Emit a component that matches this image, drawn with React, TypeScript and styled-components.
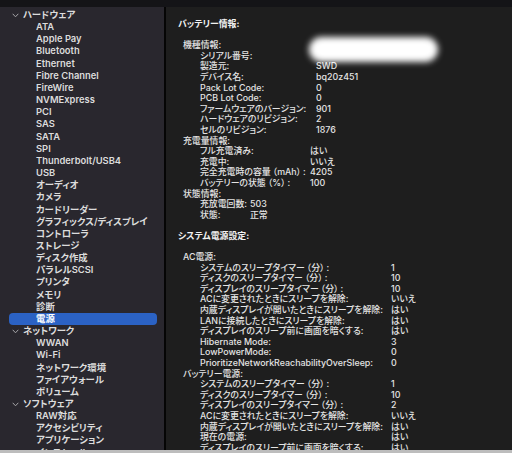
import React from 'react';
import styled, { createGlobalStyle } from 'styled-components';

const GlobalStyle = createGlobalStyle`
  html, body {
    margin: 0;
    padding: 0;
    background: #1e1e1e;
  }
  body {
    font-family: 'Inter', 'Noto Sans CJK JP', sans-serif;
    -webkit-font-smoothing: antialiased;
  }
`;

const Window = styled.div`
  width: 512px;
  height: 453px;
  display: flex;
  flex-direction: column;
  overflow: hidden;
  background: #1e1e1e;
`;

const TopBar = styled.div`
  height: 7px;
  flex-shrink: 0;
  background: #141417;
`;

const BottomBar = styled.div`
  height: 3px;
  flex-shrink: 0;
  background: #bdbdbd;
`;

const Main = styled.div`
  flex: 1;
  display: flex;
  min-height: 0;
`;

const Sidebar = styled.div`
  width: 164px;
  flex-shrink: 0;
  background: #29272e;
  border-right: 2px solid #050505;
  padding-top: 2px;
  overflow: hidden;
  font-size: 9.4px;
  font-weight: 600;
  color: #dcdcdc;
  font-feature-settings: 'palt';
`;

const SideRow = styled.div<{ $level: number; $selected?: boolean }>`
  height: 12.17px;
  line-height: 12.17px;
  display: flex;
  align-items: center;
  margin: 0 7px 0 9px;
  padding-left: ${(p) => (p.$level === 0 ? 3 : 27)}px;
  border-radius: 4px;
  white-space: nowrap;
  background: ${(p) => (p.$selected ? '#2b62c4' : 'transparent')};
  color: ${(p) => (p.$selected ? '#ffffff' : '#dcdcdc')};
`;

const Chevron = styled.svg`
  width: 7px;
  height: 5px;
  margin-right: 4px;
  flex-shrink: 0;
`;

const Content = styled.div`
  flex: 1;
  position: relative;
  padding-top: 12px;
  overflow: hidden;
  font-size: 8.9px;
  font-weight: 500;
  color: #e4e4e4;
  font-feature-settings: 'palt';
`;

const Line = styled.div<{ $indent: number; $labelWidth?: number }>`
  height: 10.6px;
  line-height: 10.6px;
  padding-left: ${(p) => p.$indent}px;
  white-space: nowrap;
  display: grid;
  grid-template-columns: ${(p) => (p.$labelWidth ? `${p.$labelWidth}px auto` : 'auto')};
`;

const Heading = styled(Line)`
  font-weight: 700;
  color: #f2f2f2;
`;

const Blank = styled.div`
  height: 10.6px;
`;

const Paren = styled.span`
  padding: 0 2px;
`;

const Redaction = styled.div`
  position: absolute;
  left: 143px;
  top: 30px;
  width: 129px;
  height: 25px;
  border-radius: 13px;
  background: #ffffff;
  filter: blur(3px);
`;

type SideItem = { label: string; level: number; selected?: boolean };

const sidebar: SideItem[] = [
  { label: 'ハードウェア', level: 0 },
  ...[
    'ATA', 'Apple Pay', 'Bluetooth', 'Ethernet', 'Fibre Channel', 'FireWire', 'NVMExpress',
    'PCI', 'SAS', 'SATA', 'SPI', 'Thunderbolt/USB4', 'USB', 'オーディオ', 'カメラ',
    'カードリーダー', 'グラフィックス/ディスプレイ', 'コントローラ', 'ストレージ', 'ディスク作成',
    'パラレルSCSI', 'プリンタ', 'メモリ', '診断',
  ].map((label) => ({ label, level: 1 })),
  { label: '電源', level: 1, selected: true },
  { label: 'ネットワーク', level: 0 },
  ...['WWAN', 'Wi-Fi', 'ネットワーク環境', 'ファイアウォール', 'ボリューム'].map((label) => ({ label, level: 1 })),
  { label: 'ソフトウェア', level: 0 },
  ...['RAW対応', 'アクセシビリティ', 'アプリケーション', 'インストール'].map((label) => ({ label, level: 1 })),
];

type Group = { title: string; width: number; rows: [string, string][] };

const batteryGroups: Group[] = [
  {
    title: '機種情報:',
    width: 116,
    rows: [
      ['シリアル番号:', ''],
      ['製造元:', 'SWD'],
      ['デバイス名:', 'bq20z451'],
      ['Pack Lot Code:', '0'],
      ['PCB Lot Code:', '0'],
      ['ファームウェアのバージョン:', '901'],
      ['ハードウェアのリビジョン:', '2'],
      ['セルのリビジョン:', '1876'],
    ],
  },
  {
    title: '充電量情報:',
    width: 110,
    rows: [
      ['フル充電済み:', 'はい'],
      ['充電中:', 'いいえ'],
      ['完全充電時の容量（mAh）:', '4205'],
      ['バッテリーの状態（%）:', '100'],
    ],
  },
  {
    title: '状態情報:',
    width: 50,
    rows: [
      ['充放電回数:', '503'],
      ['状態:', '正常'],
    ],
  },
];

const powerGroups: Group[] = [
  {
    title: 'AC電源:',
    width: 191,
    rows: [
      ['システムのスリープタイマー（分）:', '1'],
      ['ディスクのスリープタイマー（分）:', '10'],
      ['ディスプレイのスリープタイマー（分）:', '10'],
      ['ACに変更されたときにスリープを解除:', 'いいえ'],
      ['内蔵ディスプレイが開いたときにスリープを解除:', 'はい'],
      ['LANに接続したときにスリープを解除:', 'はい'],
      ['ディスプレイのスリープ前に画面を暗くする:', 'はい'],
      ['Hibernate Mode:', '3'],
      ['LowPowerMode:', '0'],
      ['PrioritizeNetworkReachabilityOverSleep:', '0'],
    ],
  },
  {
    title: 'バッテリー電源:',
    width: 191,
    rows: [
      ['システムのスリープタイマー（分）:', '1'],
      ['ディスクのスリープタイマー（分）:', '10'],
      ['ディスプレイのスリープタイマー（分）:', '2'],
      ['ACに変更されたときにスリープを解除:', 'いいえ'],
      ['内蔵ディスプレイが開いたときにスリープを解除:', 'はい'],
      ['現在の電源:', 'はい'],
      ['ディスプレイのスリープ前に画面を暗くする:', 'はい'],
    ],
  },
];

// full-width brackets keep a little air around them, as the macOS font does
function Label({ text }: { text: string }) {
  const m = text.match(/^(.*)（(.*)）(.*)$/);
  if (!m) return <span>{text}</span>;
  return (
    <span>
      {m[1]}
      <Paren>（{m[2]}）</Paren>
      {m[3]}
    </span>
  );
}

function GroupBlock({ group }: { group: Group }) {
  return (
    <>
      <Line $indent={17}>{group.title}</Line>
      {group.rows.map(([label, value], i) => (
        <Line key={i} $indent={34} $labelWidth={group.width}>
          <Label text={label} />
          <span>{value}</span>
        </Line>
      ))}
    </>
  );
}

export default function App() {
  return (
    <>
      <GlobalStyle />
      <Window>
        <TopBar />
        <Main>
          <Sidebar>
            {sidebar.map((item, i) => (
              <SideRow key={i} $level={item.level} $selected={item.selected}>
                {item.level === 0 && (
                  <Chevron viewBox="0 0 7 5">
                    <polyline points="0.7,0.8 3.5,3.8 6.3,0.8" fill="none" stroke="#a5a5a8" strokeWidth="1" />
                  </Chevron>
                )}
                {item.label}
              </SideRow>
            ))}
          </Sidebar>
          <Content>
            <Heading $indent={12}>バッテリー情報:</Heading>
            <Blank />
            {batteryGroups.map((g) => (
              <GroupBlock key={g.title} group={g} />
            ))}
            <Blank />
            <Heading $indent={12}>システム電源設定:</Heading>
            <Blank />
            {powerGroups.map((g) => (
              <GroupBlock key={g.title} group={g} />
            ))}
            <Redaction />
          </Content>
        </Main>
        <BottomBar />
      </Window>
    </>
  );
}
